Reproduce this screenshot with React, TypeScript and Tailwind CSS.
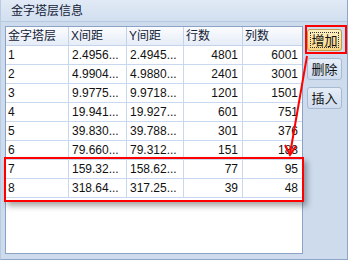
import React from "react";

const rows = [
  ["1", "2.4956...", "2.4945...", "4801", "6001"],
  ["2", "4.9904...", "4.9880...", "2401", "3001"],
  ["3", "9.9775...", "9.9718...", "1201", "1501"],
  ["4", "19.941...", "19.927...", "601", "751"],
  ["5", "39.830...", "39.788...", "301", "376"],
  ["6", "79.660...", "79.312...", "151", "188"],
  ["7", "159.32...", "158.62...", "77", "95"],
  ["8", "318.64...", "317.25...", "39", "48"],
];

const headers = ["金字塔层", "X间距", "Y间距", "行数", "列数"];
const widths = ["w-[63px]", "w-[58px]", "w-[57px]", "w-[59px]", "w-[59px]"];

export default function App() {
  return (
    <div
      className="relative w-[348px] h-[260px] overflow-hidden bg-[#cddbed] border-l border-l-[#b8cbe3] border-r border-r-[#8ea7c8] border-b border-b-[#8ea7c8] text-[#111] text-[12px]"
      style={{ fontFamily: '"Liberation Sans", "Noto Sans CJK SC", sans-serif' }}
    >
      {/* title bar */}
      <div className="h-[22px] flex items-center pl-[10px] bg-gradient-to-b from-[#e1eaf6] to-[#d2dfef] border-b border-b-[#b7c9e0] text-[12px] text-[#152238]">
        金字塔层信息
      </div>

      <div className="flex">
        {/* grid */}
        <div className="ml-[4px] mt-[4px] w-[298px] h-[228px] border border-[#8aa3c5] bg-white">
          <div className="flex h-[19px] bg-gradient-to-b from-[#fbfcfe] to-[#e6edf7] border-b border-b-[#c2d3ea]">
            {headers.map((h, i) => (
              <div
                key={h}
                className={`${widths[i]} h-full flex items-center pl-[2px] text-[#152238] ${i < 4 ? "border-r border-r-[#c2d3ea]" : ""}`}
              >
                {h}
              </div>
            ))}
          </div>
          {rows.map((r) => (
            <div key={r[0]} className="flex h-[19px] border-b border-b-[#c8d8ee]">
              {r.map((c, i) => (
                <div
                  key={i}
                  className={`${widths[i]} h-full flex items-center ${i >= 3 ? "justify-end pr-[4px]" : i === 0 ? "pl-[2px]" : "pl-[3px]"} ${i < 4 ? "border-r border-r-[#c8d8ee]" : ""}`}
                >
                  {c}
                </div>
              ))}
            </div>
          ))}
        </div>

        {/* buttons */}
        <div className="ml-[4px] mt-[7px] flex flex-col gap-[7px] w-[35px] text-[13px]">
          <button className="h-[22px] rounded-[3px] border border-[#c29b4e] bg-gradient-to-b from-[#fff1c4] to-[#f7d483] flex items-center justify-center p-[2px]">
            <span className="w-full h-full flex items-center justify-center border border-dotted border-[#3a3a3a] leading-none">
              增加
            </span>
          </button>
          <button className="h-[22px] rounded-[3px] border border-[#a7bad4] bg-gradient-to-b from-[#e6eef8] to-[#cfdcee] flex items-center justify-center leading-none">
            删除
          </button>
          <button className="h-[22px] rounded-[3px] border border-[#a7bad4] bg-gradient-to-b from-[#e6eef8] to-[#cfdcee] flex items-center justify-center leading-none">
            插入
          </button>
        </div>
      </div>

      {/* annotations */}
      <div className="absolute left-[3px] top-[157px] w-[300px] h-[45px] border-2 border-[#ff0000] shadow-[3px_4px_6px_rgba(0,0,0,0.35)]" />
      <div className="absolute left-[304px] top-[25px] w-[42px] h-[29px] border-2 border-[#ff0000]" />
      <svg className="absolute left-0 top-0" width="348" height="260">
        <line x1="306" y1="56" x2="289" y2="154" stroke="#ff0000" strokeWidth="2" />
        <polyline points="284,145 289,155 295,146" fill="none" stroke="#ff0000" strokeWidth="2" />
      </svg>
    </div>
  );
}
